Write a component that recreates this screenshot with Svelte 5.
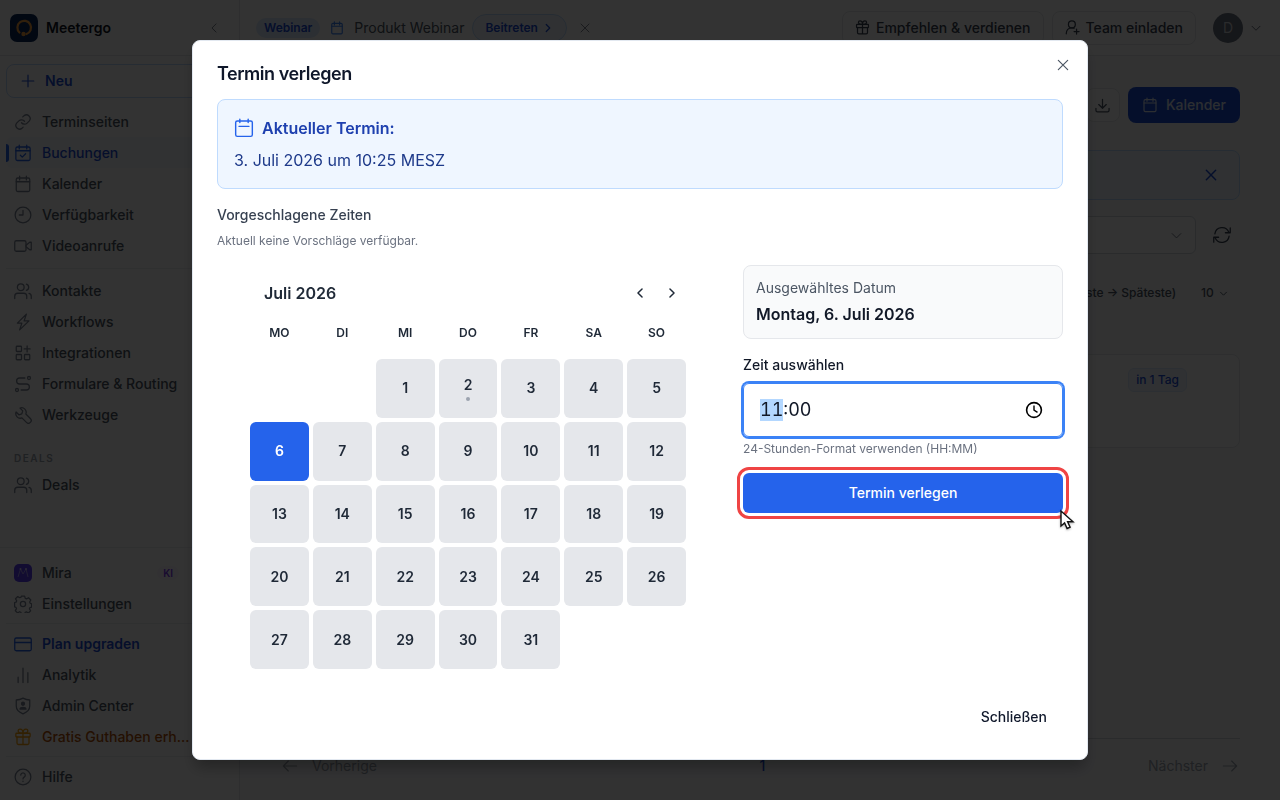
<script>
  import { onMount } from "svelte";

  // 24x24 line icons
  const icons = {
    link: '<path d="M10 13a5 5 0 0 0 7.500.5l3-3a5 5 0 0 0-7-7l-1.800 1.700"/><path d="M14 11a5 5 0 0 0-7.500-.5l-3 3a5 5 0 0 0 7 7l1.700-1.700"/>',
    calcheck: '<rect x="2.500" y="4" width="19" height="18" rx="2"/><path d="M7 1.500v5M17 1.500v5M2.500 9h19M8.500 15l2.500 2.500 4.500-4.500"/>',
    calendar: '<rect x="3" y="4" width="18" height="18" rx="2"/><path d="M7.500 1.500v5M16.500 1.500v5M3 9h18"/>',
    calnote: '<rect x="2" y="3.500" width="20" height="18.500" rx="2"/><path d="M7 1.500v4M17 1.500v4M6 10h12"/>',
    clock: '<circle cx="12" cy="12" r="10.500"/><path d="M12 6v6H7"/>',
    video: '<rect x="1" y="5" width="15" height="14" rx="2"/><path d="M16 11l5-4h2v10h-2l-5-4"/>',
    users: '<circle cx="9" cy="7" r="4.500"/><path d="M1 22v-3a4 4 0 0 1 4-4h8a4 4 0 0 1 4 4v3M16.500 2.800a4.400 4.400 0 0 1 0 8.400M20 15.200a4 4 0 0 1 3 4V22"/>',
    bolt: '<path d="M16.500 1.500L4.500 13.500h6L7.500 22.500 20 10.500h-6.500z"/>',
    apps: '<rect x="3" y="3" width="7" height="7" rx="1"/><rect x="3" y="14" width="7" height="7" rx="1"/><rect x="14" y="14" width="7" height="7" rx="1"/><path d="M17.500 2.500v8M13.500 6.500h8"/>',
    route: '<circle cx="4" cy="20" r="2"/><circle cx="20" cy="4" r="2"/><path d="M14.500 4H7.500a4 4 0 0 0 0 8h9a4 4 0 0 1 0 8H9.500"/>',
    wrench: '<path d="M8 2.800a6 6 0 0 1 7.800 7.800l6 6a3.600 3.600 0 0 1-5.200 5.200l-6-6A6 6 0 0 1 2.800 8l3.700 3.700 3.900-1.300 1.300-3.900z"/>',
    gear: '<circle cx="12" cy="12" r="3.500"/><path d="M9.800 1.500h4.400l.8 3 1.700.7 2.700-1.600 3 3-1.500 2.700.7 1.700 1.900.8v4.400l-2.200.6-.7 1.600 1.600 2.600-3 3-2.600-1.500-1.700.7-.7 1.800H9.800l-.7-2-1.700-.7-2.600 1.600-3-3 1.500-2.700-.6-1.700-1.900-.7V10l2.200-.6.6-1.700L2 5.100l3-3 2.700 1.500 1.600-.6z"/>',
    card: '<rect x="1" y="4" width="22" height="17" rx="2"/><path d="M1 10h22"/>',
    bars: '<path d="M5.500 15v7M12 3v19M18.500 9v13"/>',
    shield: '<path d="M12 1.500c3 1.700 6 2.500 9 2.500v8c0 5-4 8.500-9 10.500-5-2-9-5.500-9-10.500V4c3 0 6-.8 9-2.500z"/><circle cx="12" cy="9" r="2" fill="currentColor"/><path d="M8 16c.5-3 7.500-3 8 0z" fill="currentColor"/>',
    gift: '<rect x="2.500" y="7" width="19" height="5" rx="1"/><path d="M4 12v8a2 2 0 0 0 2 2h12a2 2 0 0 0 2-2v-8M12 7v15M12 7C8 7 5.500 6 5.500 4s1.500-2.500 2.500-2.500C10.500 1.500 12 4 12 7zM12 7c4 0 6.500-1 6.500-3S17 1.500 16 1.500C13.500 1.500 12 4 12 7z"/>',
    help: '<circle cx="12" cy="12" r="10.500"/><path d="M9 9.500a3 3 0 1 1 4.500 2.600c-1 .6-1.500 1.100-1.500 2.400M12 17.500v.5"/>',
    plus: '<path d="M12 2v20M2 12h20"/>',
    close: '<path d="M4 4l16 16M20 4L4 20"/>',
    left: '<path d="M15.500 5l-7 7 7 7"/>',
    right: '<path d="M8.500 5l7 7-7 7"/>',
    down: '<path d="M4 8.500l8 8 8-8"/>',
    userplus: '<circle cx="11" cy="7" r="5.500"/><path d="M2 22c0-5.500 3.500-9.500 9-9.500 1.500 0 2.500.3 3.500.8M18.500 14.500v8M14.500 18.500h8"/>',
    download: '<path d="M12 2v14M6 10.500l6 6 6-6M1.500 16.500v3a2.500 2.500 0 0 0 2.500 2.500h16a2.500 2.500 0 0 0 2.500-2.500v-3"/>',
    refresh: '<path d="M2.500 10.500a9.700 9.700 0 0 1 18.500-2.500M23 2.500V9h-6.500M21.500 13.500a9.700 9.700 0 0 1-18.500 2.500M1 21.500V15h6.500"/>',
    arrowleft: '<path d="M22 12H2M9.500 4.500L2 12l7.500 7.500"/>',
    arrowright: '<path d="M2 12h20M14.500 4.500L22 12l-7.500 7.500"/>',
  };

  const mainNav = [
    { label: "Terminseiten", icon: "link" },
    { label: "Buchungen", icon: "calcheck", active: true },
    { label: "Kalender", icon: "calendar" },
    { label: "Verfügbarkeit", icon: "clock" },
    { label: "Videoanrufe", icon: "video" },
  ];
  const toolNav = [
    { label: "Kontakte", icon: "users" },
    { label: "Workflows", icon: "bolt" },
    { label: "Integrationen", icon: "apps" },
    { label: "Formulare & Routing", icon: "route" },
    { label: "Werkzeuge", icon: "wrench" },
  ];
  const accountNav = [
    { label: "Plan upgraden", icon: "card", kind: "upgrade" },
    { label: "Analytik", icon: "bars" },
    { label: "Admin Center", icon: "shield" },
    { label: "Gratis Guthaben erh...", icon: "gift", kind: "credit" },
  ];

  const weekdays = ["MO", "DI", "MI", "DO", "FR", "SA", "SO"];
  const days = Array.from({ length: 31 }, (_, i) => i + 1);
  const fullNames = ["Montag", "Dienstag", "Mittwoch", "Donnerstag", "Freitag", "Samstag", "Sonntag"];
  const today = 2;

  let selected = $state(6);
  let time = $state("11:00");
  let open = $state(true);
  let timeInput;

  // 1. Juli 2026 ist ein Mittwoch
  let selectedLabel = $derived(`${fullNames[(selected + 1) % 7]}, ${selected}. Juli 2026`);

  onMount(() => {
    timeInput.focus();
    timeInput.setSelectionRange(0, 2);
  });
</script>

{#snippet icon(name, size = 18, width = 1.7)}
  <svg width={size} height={size} viewBox="0 0 24 24" fill="none" stroke="currentColor" stroke-width={width} stroke-linecap="round" stroke-linejoin="round" aria-hidden="true">{@html icons[name]}</svg>
{/snippet}

{#snippet navList(items)}
  {#each items as item}
    <a href="#top" class="nav-item {item.kind ?? ''}" class:active={item.active}>
      {@render icon(item.icon)}
      <span>{item.label}</span>
    </a>
  {/each}
{/snippet}

<div class="app">
  <aside class="sidebar">
    <div class="brand">
      <svg class="logo" width="28" height="28" viewBox="0 0 28 28" aria-hidden="true">
        <rect width="28" height="28" rx="7" fill="#0b2a5c" />
        <path d="M9.500 18.500A6.800 6.800 0 1 1 16.500 20" fill="none" stroke="#f59e3c" stroke-width="2.200" stroke-linecap="round" />
        <circle cx="13.500" cy="20" r="2.200" fill="#f59e3c" />
      </svg>
      <strong>Meetergo</strong>
      <button class="collapse" aria-label="Einklappen">{@render icon("left", 14, 1.5)}</button>
    </div>
    <nav>
      <button class="new">{@render icon("plus", 14, 2)} Neu</button>
      <div class="group">{@render navList(mainNav)}</div>
      <hr />
      <div class="group">{@render navList(toolNav)}</div>
      <h3>DEALS</h3>
      <a href="#top" class="nav-item">{@render icon("users")}<span>Deals</span></a>
    </nav>
    <div class="bottom">
      <a href="#top" class="nav-item">
        <svg class="mira" width="18" height="18" viewBox="0 0 18 18" aria-hidden="true">
          <rect width="18" height="18" rx="5" fill="#5b3df5" />
          <path d="M4 13l2.500-8L9 10l3-5 2 8" fill="none" stroke="#a99cf5" stroke-width="1" stroke-linejoin="round" />
          <circle cx="6.500" cy="5" r="1" fill="#d9d2ff" /><circle cx="12" cy="5" r="1" fill="#d9d2ff" />
        </svg>
        <span>Mira</span>
        <em class="ki">KI</em>
      </a>
      <a href="#top" class="nav-item">{@render icon("gear")}<span>Einstellungen</span></a>
      <hr />
      {@render navList(accountNav)}
      <hr />
      <a href="#top" class="nav-item">{@render icon("help")}<span>Hilfe</span></a>
    </div>
  </aside>

  <div class="page">
    <header class="topbar">
      <span class="tag">Webinar</span>
      <span class="webinar-icon">{@render icon("calendar", 14, 2)}</span>
      <span class="webinar-name">Produkt Webinar</span>
      <button class="join">Beitreten {@render icon("right", 12, 2.5)}</button>
      <button class="dismiss" aria-label="Ausblenden">{@render icon("close", 12)}</button>
      <button class="outline push">{@render icon("gift", 15, 2)} Empfehlen &amp; verdienen</button>
      <button class="outline">{@render icon("userplus", 15, 2)} Team einladen</button>
      <button class="account" aria-label="Konto"><span class="avatar">D</span>{@render icon("down", 12, 2)}</button>
    </header>

    <main>
      <div class="actions">
        <button class="square" aria-label="Herunterladen">{@render icon("download", 15, 2)}</button>
        <button class="primary">{@render icon("calendar", 16)} Kalender</button>
      </div>
      <div class="banner">
        <button aria-label="Hinweis schließen">{@render icon("close", 14, 2.5)}</button>
      </div>
      <div class="filter">
        <label class="filter-box">
          <select aria-label="Filter"><option>Alle Buchungen</option></select>
          {@render icon("down", 13)}
        </label>
        <button aria-label="Aktualisieren">{@render icon("refresh", 18)}</button>
      </div>
      <div class="sorting">
        <select aria-label="Sortierung"><option>Datum (Früheste → Späteste)</option></select>
        <label class="count">
          <select aria-label="Einträge pro Seite"><option>10</option></select>
          {@render icon("down", 9, 2.5)}
        </label>
      </div>
      <div class="booking"><span>in 1 Tag</span></div>
      <footer>
        <button>{@render icon("arrowleft", 16)} Vorherige</button>
        <a href="#top">1</a>
        <button>Nächster {@render icon("arrowright", 16)}</button>
      </footer>
    </main>
  </div>
</div>

{#if open}
  <div class="overlay">
    <div class="dialog" role="dialog" aria-modal="true" aria-labelledby="dialog-title">
      <button class="close" aria-label="Dialog schließen" onclick={() => (open = false)}>{@render icon("close", 14, 2)}</button>
      <h2 id="dialog-title">Termin verlegen</h2>

      <div class="current">
        <p class="current-title">{@render icon("calnote", 20)} Aktueller Termin:</p>
        <p>3. Juli 2026 um 10:25 MESZ</p>
      </div>

      <h3 class="suggest">Vorgeschlagene Zeiten</h3>
      <p class="hint">Aktuell keine Vorschläge verfügbar.</p>

      <div class="columns">
        <div class="calendar">
          <div class="month">
            <strong>Juli 2026</strong>
            <button aria-label="Vorheriger Monat">{@render icon("left", 14, 2.5)}</button>
            <button aria-label="Nächster Monat">{@render icon("right", 14, 2.5)}</button>
          </div>
          <div class="grid weekdays">
            {#each weekdays as day}<span>{day}</span>{/each}
          </div>
          <div class="grid days">
            {#each days as day}
              <button class:selected={day === selected} onclick={() => (selected = day)}>
                {day}
                {#if day === today}<i></i>{/if}
              </button>
            {/each}
          </div>
        </div>

        <div class="side">
          <div class="date-card">
            <p>Ausgewähltes Datum</p>
            <strong>{selectedLabel}</strong>
          </div>
          <label class="time-label" for="time">Zeit auswählen</label>
          <div class="time-box">
            <input id="time" type="text" bind:value={time} bind:this={timeInput} />
            <svg width="18" height="18" viewBox="0 0 18 18" fill="none" stroke="#000" stroke-width="1.600" aria-hidden="true">
              <circle cx="9" cy="9" r="7.400" /><path d="M9 4.500V9.200l3.500 2.200" stroke-width="1.400" />
            </svg>
          </div>
          <p class="hint">24-Stunden-Format verwenden (HH:MM)</p>
          <div class="submit">
            <button>Termin verlegen</button>
            <svg class="pointer" width="16" height="22" viewBox="0 0 16 22" aria-hidden="true">
              <path d="M2 2v15l3.600-3 2.500 5.500 3-1.300-2.500-5.400H14z" fill="#fff" stroke="#111" stroke-width="1.400" />
            </svg>
          </div>
        </div>
      </div>

      <div class="dialog-footer">
        <button onclick={() => (open = false)}>Schließen</button>
      </div>
    </div>
  </div>
{/if}

<style>
  :global(body) {
    font-family: Inter, "Liberation Sans", sans-serif;
    font-size: 14px;
    line-height: 20px;
    color: #111827;
    background: #f9fafb;
  }
  * {
    box-sizing: border-box;
  }
  button, input, select {
    font: inherit;
    color: inherit;
    background: none;
    border: 0;
    padding: 0;
  }
  button {
    display: flex;
    align-items: center;
    justify-content: center;
    cursor: pointer;
  }
  select {
    appearance: none;
  }
  svg {
    flex: none;
  }
  a {
    color: inherit;
    text-decoration: none;
  }
  p, h2, h3 {
    margin: 0;
  }
  hr {
    width: 100%;
    margin: 7px 0 6px;
    border: 0;
    border-top: 1px solid #eceef1;
  }

  .app {
    display: flex;
    height: 100vh;
    overflow: hidden;
  }

  /* sidebar */
  .sidebar {
    display: flex;
    flex-direction: column;
    justify-content: space-between;
    flex: none;
    width: 240px;
    background: #fff;
    border-right: 1px solid #e5e7eb;
  }
  .brand {
    display: flex;
    align-items: center;
    gap: 8px;
    height: 56px;
    padding: 0 18px 0 10px;
    border-bottom: 1px solid #e5e7eb;
  }
  .brand strong {
    font-weight: 600;
  }
  .collapse {
    margin-left: auto;
    color: #6b7280;
  }
  nav {
    flex: 1;
    padding: 8px 6px;
  }
  .new {
    justify-content: flex-start;
    gap: 10px;
    width: 100%;
    height: 34px;
    margin-bottom: 8px;
    padding: 0 14px;
    color: #1d4ed8;
    font-weight: 600;
    border: 1px solid #bfdbfe;
    border-radius: 8px;
  }
  .nav-item {
    position: relative;
    display: flex;
    align-items: center;
    gap: 10px;
    height: 31px;
    padding: 0 8px;
    color: #4b5563;
    font-weight: 500;
    white-space: nowrap;
  }
  .nav-item :global(svg) {
    color: #7b8494;
  }
  .nav-item.active {
    color: #1d4ed8;
    background: #f5f9ff;
    border-radius: 6px;
  }
  .nav-item.active::before {
    content: "";
    position: absolute;
    left: 0;
    width: 3px;
    height: 18px;
    background: #2563eb;
    border-radius: 0 3px 3px 0;
  }
  .nav-item.active :global(svg),
  .nav-item.upgrade :global(svg) {
    color: #2563eb;
  }
  .nav-item.upgrade {
    color: #1d4ed8;
    font-weight: 600;
  }
  .nav-item.credit {
    color: #b45309;
  }
  .nav-item.credit :global(svg) {
    color: #f59e0b;
  }
  nav h3 {
    padding: 20px 8px 3px;
    color: #9ca3af;
    font-size: 10px;
    line-height: 16px;
    font-weight: 600;
    letter-spacing: 0.15em;
  }
  .bottom {
    padding: 9px 6px 8px;
    border-top: 1px solid #eceef1;
  }
  .bottom hr {
    margin: 4px 0;
  }
  .ki {
    margin-left: auto;
    margin-right: 46px;
    padding: 0 6px;
    color: #7c3aed;
    background: #faf5ff;
    border-radius: 8px;
    font-size: 10px;
    line-height: 14px;
    font-style: normal;
    font-weight: 600;
  }

  /* page behind the dialog */
  .page {
    display: flex;
    flex-direction: column;
    flex: 1;
    min-width: 0;
  }
  .topbar {
    display: flex;
    align-items: center;
    height: 56px;
    padding: 0 18px 0 16px;
    background: #fff;
    border-bottom: 1px solid #e5e7eb;
  }
  .tag {
    padding: 0 8px;
    color: #1d4ed8;
    background: #dbeafe;
    border-radius: 10px;
    font-size: 12px;
    font-weight: 600;
  }
  .webinar-icon {
    display: flex;
    margin: 0 10px;
    color: #3b82f6;
  }
  .webinar-name {
    color: #4b5563;
  }
  .join {
    gap: 4px;
    height: 28px;
    margin: 0 12px 0 8px;
    padding: 0 12px;
    color: #1d4ed8;
    background: #eff6ff;
    border: 1px solid #bfdbfe;
    border-radius: 14px;
    font-size: 12px;
    font-weight: 600;
  }
  .dismiss {
    color: #6b7280;
  }
  .outline {
    gap: 6px;
    height: 34px;
    margin-left: 8px;
    padding: 0 12px;
    color: #374151;
    border: 1px solid #e5e7eb;
    border-radius: 8px;
    font-weight: 500;
  }
  .push {
    margin-left: auto;
  }
  .account {
    gap: 7px;
    margin-left: 17px;
    color: #6b7280;
  }
  .avatar {
    width: 30px;
    color: #d1d5db;
    background: #6b7280;
    border-radius: 50%;
    line-height: 30px;
  }
  main {
    display: flex;
    flex-direction: column;
    flex: 1;
    padding: 31px 40px 14px;
  }
  .actions {
    display: flex;
    align-items: center;
    justify-content: flex-end;
    gap: 8px;
  }
  .square {
    width: 34px;
    height: 34px;
    color: #4b5563;
    background: #fff;
    border: 1px solid #e5e7eb;
    border-radius: 8px;
  }
  .primary {
    gap: 8px;
    height: 36px;
    padding: 0 14px;
    color: #dbe4f5;
    background: #1d4ed8;
    border-radius: 8px;
    font-weight: 500;
  }
  .banner {
    display: flex;
    justify-content: flex-end;
    height: 50px;
    margin-top: 27px;
    padding: 0 21px;
    color: #1d4ed8;
    background: #eff6ff;
    border: 1px solid #bfdbfe;
    border-radius: 8px;
  }
  .filter {
    display: flex;
    align-items: center;
    gap: 17px;
    margin-top: 16px;
    padding-right: 9px;
    color: #374151;
  }
  .filter-box {
    display: flex;
    align-items: center;
    flex: 1;
    height: 38px;
    padding: 0 12px;
    color: #6b7280;
    background: #fff;
    border: 1px solid #d1d5db;
    border-radius: 6px;
  }
  .filter-box select {
    flex: 1;
  }
  .sorting {
    display: flex;
    justify-content: flex-end;
    gap: 24px;
    margin-top: 29px;
    padding-right: 12px;
    color: #4b5563;
    font-size: 12px;
    font-weight: 500;
  }
  .count {
    display: flex;
    align-items: center;
    gap: 5px;
  }
  .booking {
    height: 94px;
    margin-top: 51px;
    padding: 13px 52px;
    background: #fff;
    border: 1px solid #e5e7eb;
    border-radius: 8px;
    text-align: right;
  }
  .booking span {
    display: inline-block;
    padding: 1px 7px;
    color: #1d4ed8;
    background: #eff6ff;
    border: 1px solid #dbeafe;
    border-radius: 6px;
    font-size: 12px;
    font-weight: 500;
  }
  footer {
    display: flex;
    justify-content: space-between;
    align-items: center;
    height: 48px;
    margin-top: auto;
    padding: 7px 2px 0;
    color: #9ca3af;
    border-top: 1px solid #d1d5db;
  }
  footer button {
    gap: 14px;
  }
  footer a {
    color: #1d4ed8;
    font-weight: 500;
  }

  /* dialog */
  .overlay {
    position: fixed;
    inset: 0;
    display: flex;
    align-items: center;
    justify-content: center;
    background: rgba(0, 0, 0, 0.8);
  }
  .dialog {
    position: relative;
    width: 70%;
    max-width: 896px;
    min-width: 800px;
    padding: 24px;
    background: #fff;
    border: 1px solid #e2e8f0;
    border-radius: 8px;
    box-shadow: 0 10px 15px -3px rgba(0, 0, 0, 0.3);
  }
  .close {
    position: absolute;
    top: 17px;
    right: 17px;
    color: #4b5563;
  }
  h2 {
    color: #0f172a;
    font-size: 18px;
    line-height: 18px;
    font-weight: 600;
    letter-spacing: -0.025em;
  }
  .current {
    display: flex;
    flex-direction: column;
    gap: 8px;
    margin: 16px 0;
    padding: 16px;
    color: #1e3a8a;
    background: #eff6ff;
    border: 1px solid #bfdbfe;
    border-radius: 8px;
    font-size: 16px;
    line-height: 24px;
  }
  .current-title {
    display: flex;
    align-items: center;
    gap: 8px;
    color: #1e40af;
    font-weight: 600;
  }
  .current-title :global(svg) {
    color: #2563eb;
  }
  .suggest {
    margin-bottom: 8px;
    color: #374151;
    font-size: 14px;
    font-weight: 500;
  }
  .hint {
    color: #6b7280;
    font-size: 12px;
    line-height: 16px;
  }
  .columns {
    display: grid;
    grid-template-columns: 1fr 320px;
    gap: 24px;
    margin-top: 16px;
  }
  .calendar {
    width: 100%;
    max-width: 436px;
    margin: 0 auto;
    padding: 14px 0 16px;
    color: #1f2937;
  }
  .month {
    display: flex;
    align-items: center;
    gap: 4px;
    padding-left: 14px;
  }
  .month strong {
    flex: 1;
    font-size: 16px;
    font-weight: 600;
  }
  .month button {
    width: 28px;
    height: 28px;
  }
  .grid {
    display: grid;
    grid-template-columns: repeat(7, 1fr);
    gap: 4px;
  }
  .weekdays {
    margin: 16px 0;
    text-align: center;
    font-size: 12px;
    font-weight: 600;
  }
  .days button {
    flex-direction: column;
    gap: 2px;
    aspect-ratio: 1;
    background: #e5e7eb;
    border-radius: 6px;
    font-weight: 600;
  }
  .days button:first-child {
    grid-column-start: 3;
  }
  .days .selected {
    color: #fff;
    background: #2563eb;
  }
  .days i {
    width: 4px;
    height: 4px;
    background: #9ca3af;
    border-radius: 50%;
  }
  .date-card {
    padding: 12px;
    background: #f9fafb;
    border: 1px solid #e5e7eb;
    border-radius: 8px;
  }
  .date-card p {
    margin-bottom: 4px;
    color: #4b5563;
  }
  .date-card strong {
    display: block;
    font-size: 16px;
    line-height: 24px;
    font-weight: 600;
  }
  .time-label {
    display: block;
    margin: 16px 0 8px;
    font-weight: 500;
  }
  .time-box {
    display: flex;
    align-items: center;
    height: 54px;
    margin-bottom: 4px;
    padding: 0 19px 0 16px;
    border: 1px solid #3b82f6;
    border-radius: 6px;
    box-shadow: 0 0 0 2px #3b82f6;
  }
  .time-box input {
    flex: 1;
    min-width: 0;
    font-size: 18px;
    line-height: 22px;
    font-variant-numeric: tabular-nums;
    outline: 0;
  }
  .time-box input::selection {
    color: #111827;
    background: #b3d7ff;
  }
  .submit {
    position: relative;
    margin-top: 16px;
  }
  .submit button {
    width: 100%;
    height: 40px;
    color: #fff;
    background: #2563eb;
    border-radius: 6px;
    outline: 3px solid #ef4444;
    outline-offset: 3px;
    font-weight: 500;
  }
  .pointer {
    position: absolute;
    right: -12px;
    bottom: -18px;
    filter: drop-shadow(0 1px 1px rgba(0, 0, 0, 0.3));
  }
  .dialog-footer {
    display: flex;
    justify-content: flex-end;
    margin-top: 14px;
  }
  .dialog-footer button {
    height: 36px;
    padding: 0 16px;
    color: #0f172a;
    font-weight: 500;
  }
</style>
